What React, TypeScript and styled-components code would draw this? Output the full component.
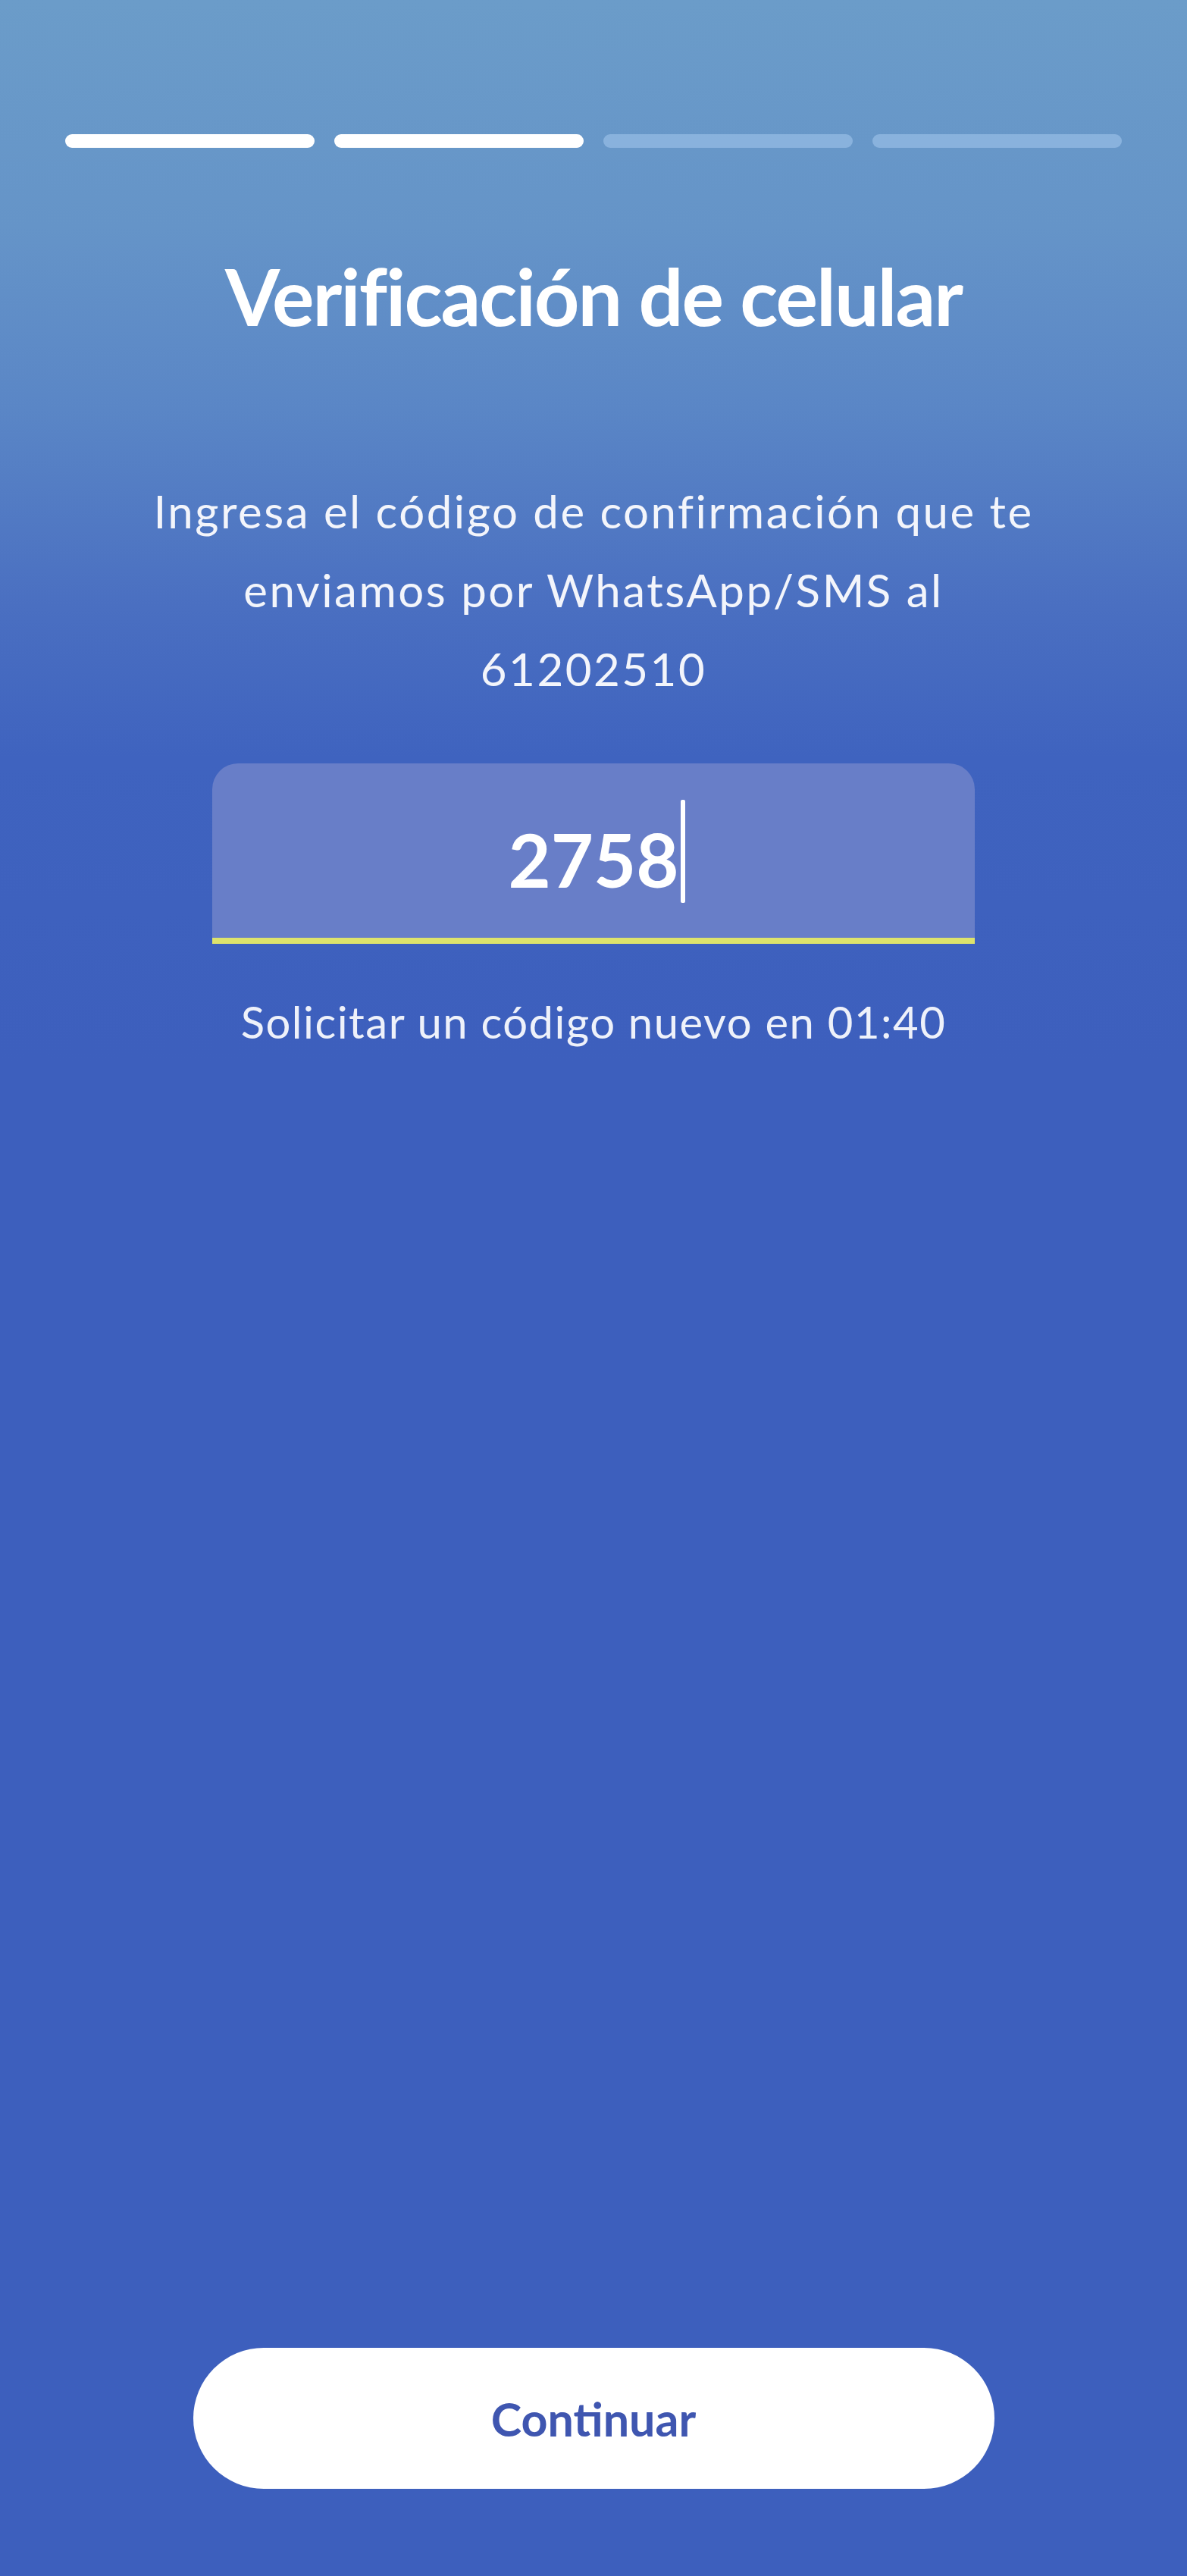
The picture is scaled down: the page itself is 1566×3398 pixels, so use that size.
import React from "react";
import styled, { createGlobalStyle } from "styled-components";

const GlobalStyle = createGlobalStyle`
  html, body {
    margin: 0;
    padding: 0;
  }
  body {
    font-family: Lato, "Open Sans", "Liberation Sans", sans-serif;
    background: #3d5fbd;
  }
  * { box-sizing: border-box; }
`;

const Page = styled.div`
  width: 1566px;
  min-height: 3398px;
  display: flex;
  flex-direction: column;
  align-items: center;
  padding: 177px 86px 115px;
  background: linear-gradient(
    180deg,
    #6b9cc9 0px,
    #6594c8 300px,
    #5a86c6 540px,
    #4a6fc1 800px,
    #3f63bf 1000px,
    #3d5fbd 1400px,
    #3d5fbd 100%
  );
  color: #ffffff;
`;

const Progress = styled.div`
  width: 100%;
  display: grid;
  grid-template-columns: repeat(4, 1fr);
  gap: 26px;
`;

const Step = styled.div<{ $done: boolean }>`
  height: 18px;
  border-radius: 9px;
  background: ${(p) => (p.$done ? "#ffffff" : "rgba(160, 196, 235, 0.6)")};
`;

const Title = styled.h1`
  margin: 135px 0 0;
  font-size: 104px;
  line-height: 120px;
  font-weight: 700;
  letter-spacing: -2px;
  text-align: center;
  color: #ffffff;
`;

const Description = styled.p`
  margin: 172px 0 0;
  font-size: 60px;
  line-height: 104px;
  font-weight: 400;
  text-align: center;
  color: #f3f5fb;
  letter-spacing: 2.5px;
`;

const CodeField = styled.div`
  margin-top: 73px;
  width: 1006px;
  height: 238px;
  display: flex;
  align-items: center;
  justify-content: center;
  padding-top: 22px;
  background: #687ec8;
  border-radius: 34px 34px 0 0;
  border-bottom: 8px solid #dde36c;
`;

const CodeText = styled.span`
  position: relative;
  font-size: 97px;
  line-height: 1;
  font-weight: 700;
  color: #ffffff;
`;

const Caret = styled.span`
  position: absolute;
  left: 100%;
  margin-left: 2px;
  top: -30px;
  width: 6px;
  height: 136px;
  border-radius: 2px;
  background: #ffffff;
`;

const Timer = styled.p`
  margin: 63px 0 0;
  font-size: 58px;
  line-height: 80px;
  font-weight: 400;
  color: #eef1fa;
  text-align: center;
  letter-spacing: 1.5px;
`;

const ContinueButton = styled.button`
  margin-top: auto;
  width: 1057px;
  height: 186px;
  border: none;
  border-radius: 93px;
  background: #ffffff;
  color: #3f56b0;
  font-family: Lato, "Open Sans", "Liberation Sans", sans-serif;
  font-size: 61px;
  font-weight: 700;
  cursor: pointer;
`;

const steps = [true, true, false, false];

export default function App() {
  return (
    <>
      <GlobalStyle />
      <Page>
        <Progress>
          {steps.map((done, i) => (
            <Step key={i} $done={done} />
          ))}
        </Progress>
        <Title>Verificación de celular</Title>
        <Description>
          Ingresa el código de confirmación que te
          <br />
          enviamos por WhatsApp/SMS al
          <br />
          61202510
        </Description>
        <CodeField>
          <CodeText>
            2758
            <Caret />
          </CodeText>
        </CodeField>
        <Timer>Solicitar un código nuevo en 01:40</Timer>
        <ContinueButton>Continuar</ContinueButton>
      </Page>
    </>
  );
}
